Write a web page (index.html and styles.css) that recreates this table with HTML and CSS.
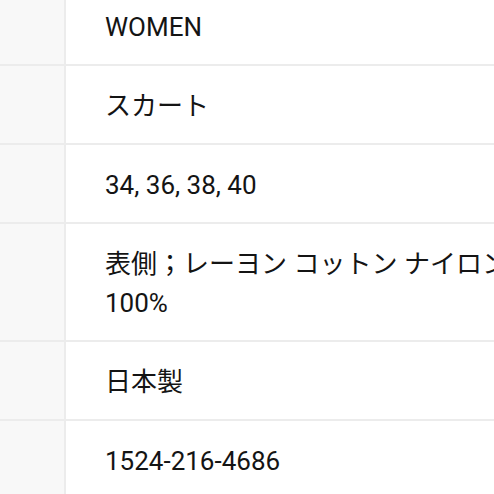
FILE: index.html
```html
<!DOCTYPE html>
<html lang="ja">
<head>
<meta charset="utf-8">
<link rel="stylesheet" href="styles.css">
</head>
<body>
<div class="spec">
  <div class="row"><div class="label"></div><div class="value">WOMEN</div></div>
  <div class="row"><div class="label"></div><div class="value">スカート</div></div>
  <div class="row"><div class="label"></div><div class="value">34, 36, 38, 40</div></div>
  <div class="row"><div class="label"></div><div class="value">表側；レーヨン コットン ナイロン<br>100%</div></div>
  <div class="row"><div class="label"></div><div class="value">日本製</div></div>
  <div class="row"><div class="label"></div><div class="value">1524-216-4686</div></div>
</div>
</body>
</html>
```
FILE: styles.css
```css
html, body {
  margin: 0;
  padding: 0;
  background: #ffffff;
  overflow: hidden;
}
.spec {
  margin-top: -13px;
  width: 494px;
  overflow: hidden;
  font-family: Roboto, "Noto Sans CJK JP", sans-serif;
  font-size: 26px;
  color: #141414;
}
.row {
  display: grid;
  grid-template-columns: 64px 1fr;
  column-gap: 2px;
  background: #ececec;
  border-bottom: 2px solid #ececec;
}
.label {
  background: #f8f8f8;
}
.value {
  background: #ffffff;
  padding: 21px 0 17px 39px;
  line-height: 39px;
  white-space: nowrap;
  overflow: hidden;
}
```
